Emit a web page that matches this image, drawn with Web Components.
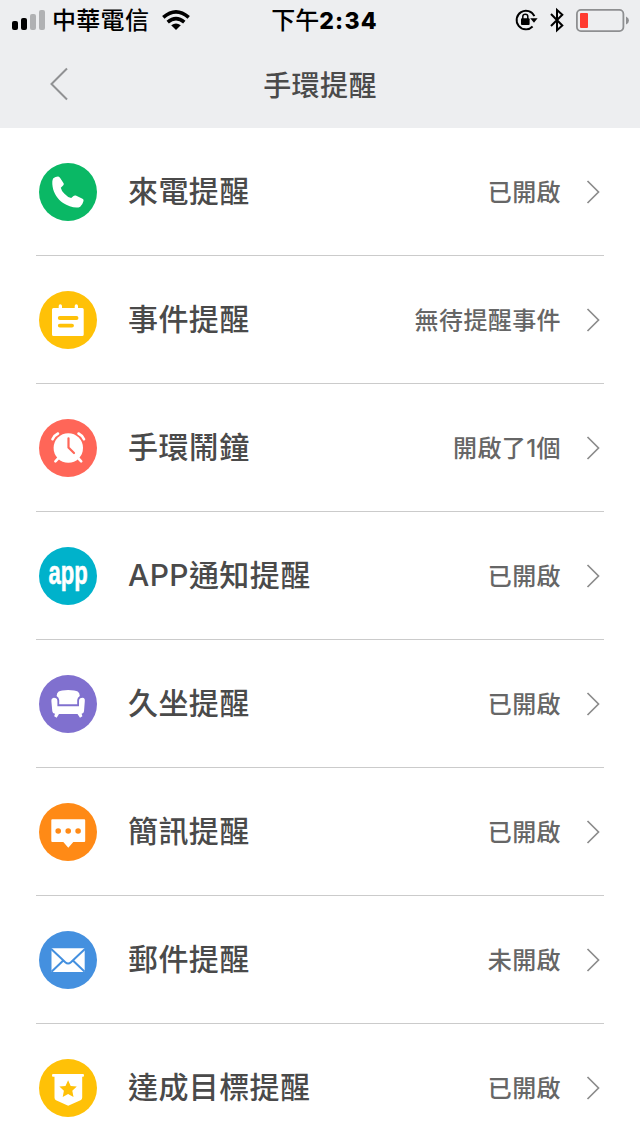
<!DOCTYPE html>
<html lang="zh-Hant">
<head>
<meta charset="utf-8">
<title>手環提醒</title>
<style>
    body {
        margin: 0;
        background: #fff;
        font-family: Inter, "Noto Sans CJK TC", sans-serif;
        font-weight: 500;
        color: #4a4a4a;
    }
</style>
</head>
<body>
<reminder-screen></reminder-screen>

<script>
// white shapes drawn on each 58x58 colored circle
const ICONS = {
    call: {
        color: '#0ab865',
        shape: `<path fill="#fff" d="M14.3 15.2Q16.5 13.3 19.2 13.4Q20.3 13.5 21 14.8L24.6 20.2Q25.2 21.2 24.3 22.2L21.8 24.7Q22.3 27.5 25.2 30.4Q28.8 34.3 32.2 35.1L34.5 32.9Q35.5 32.1 36.8 32.6L43.5 35.8Q45 36.6 44.5 38Q43.5 42 41.2 43.7C37.5 46 29.5 43.5 24.1 39.9C18.5 36.3 14.5 30 13.6 23.5Q12.7 17.5 14.3 15.2Z"/>`
    },
    event: {
        color: '#ffc107',
        shape: `<path fill="#fff" d="M14.5 17H19.7V15Q19.7 13.3 21.3 13.3T23 15V17H35.7V15Q35.7 13.3 37.3 13.3T39 15V17H43.3Q44.7 17 44.7 18.5V43.5Q44.7 45 43.2 45H14.5Q13 45 13 43.5V18.5Q13 17 14.5 17Z"/>
            <path d="M20.8 27H37.5M20.8 34.6H33" stroke="#ffc107" stroke-width="3.9" stroke-linecap="round"/>`
    },
    alarm: {
        color: '#ff6658',
        shape: `<circle cx="29.3" cy="29" r="14.7" fill="#fff"/>
            <path d="M13.5 20.2Q15 16.5 19 14.5M39.5 14.5Q43.5 16.5 45 20.2M16.4 42.3L20 38.5M42.2 42.3L38.6 38.5" fill="none" stroke="#fff" stroke-width="2.6" stroke-linecap="round"/>
            <path d="M29.5 19.3V28.5L35 34" fill="none" stroke="#ff6658" stroke-width="2.2" stroke-linecap="round"/>`
    },
    app: {
        color: '#00b2cb',
        shape: `<text transform="translate(9.4 37) scale(.65 1)" fill="#fff" stroke="#fff" stroke-width=".6" font-family="Liberation Sans, sans-serif" font-weight="700" font-size="34">app</text>`
    },
    sit: {
        color: '#8070cf',
        shape: `<path fill="#fff" d="M17.6 21Q17.8 18 19.7 16.6Q22 15 29.2 15T38.7 16.6Q40.7 18 40.8 21Q38.4 22.3 38.2 25V29.3H20.2V25Q20 22.3 17.6 21Z"/>
            <path fill="#fff" d="M14.8 22.8Q18.3 22.8 18.4 26V31.2H40V26Q40.1 22.8 43.6 22.8Q46.2 23.2 45.8 26.2L45 36.2Q44.8 38.6 42.6 38.8L43.4 41.3L41 42.7L38.5 39H20L17.7 42.7L15.2 41.3L16 38.8Q13.5 38.5 13.3 36.2L12.4 26.2Q12.2 23.3 14.8 22.8Z"/>`
    },
    sms: {
        color: '#ff8a16',
        shape: `<path fill="#fff" d="M13.3 16.3H45.2Q46.2 16.3 46.2 17.3V38Q46.2 39 45.2 39H34.3L29.3 44.8L24.3 39H13.3Q12.3 39 12.3 38V17.3Q12.3 16.3 13.3 16.3Z"/>
            <g fill="#ff8a16"><circle cx="19.2" cy="28" r="2.8"/><circle cx="29.2" cy="28" r="2.8"/><circle cx="39.1" cy="28" r="2.8"/></g>`
    },
    mail: {
        color: '#4490df',
        shape: `<path fill="#fff" d="M12.5 17.3H45.7V41H12.5Z"/>
            <path d="M12 17.7L26.3 31.2Q29.1 33.7 31.9 31.2L46.2 17.7M12.5 40.8L24.3 29.5M45.7 40.8L33.9 29.5" fill="none" stroke="#4490df" stroke-width="2"/>`
    },
    goal: {
        color: '#ffc107',
        shape: `<path fill="#fff" d="M14 15H44Q45 15 45 16.4T44 17.8H43.2V38.5Q43.2 40.5 41.5 41.3L29.2 46.7L17 41.3Q15.5 40.5 15.5 38.5V17.8H14Q13 17.8 13 16.4T14 15Z"/>
            <path fill="#ffc107" d="M29.1 21.2L31.7 26.9L37.8 27.6L33.3 31.8L34.5 37.9L29.1 34.9L23.7 37.9L24.9 31.8L20.4 27.6L26.5 26.9Z"/>`
    }
};

// round icon, picked by the name attribute
class ReminderIcon extends HTMLElement {
    constructor() {
        super();
        this.attachShadow({ mode: 'open' });
    }

    connectedCallback() {
        const icon = ICONS[this.getAttribute('name')];
        this.shadowRoot.innerHTML = `
            <style>
                :host {
                    display: block;
                    flex: none;
                    width: 58px;
                    height: 58px;
                    border-radius: 50%;
                    background: ${icon.color};
                }
                svg { display: block; overflow: visible; }
            </style>
            <svg width="58" height="58" viewBox="0 0 58 58">${icon.shape}</svg>
        `;
    }
}

// one row: icon, label slot, value slot and chevron
class ReminderRow extends HTMLElement {
    constructor() {
        super();
        this.attachShadow({ mode: 'open' });
    }

    connectedCallback() {
        this.shadowRoot.innerHTML = `
            <style>
                :host {
                    display: flex;
                    align-items: center;
                    box-sizing: border-box;
                    flex: none;
                    height: 128px;
                    padding: 1px 4px 0 3px;
                    border-bottom: 1px solid #cbcbcb;
                    white-space: nowrap;
                }
                .label {
                    flex: 1;
                    margin: 0 0 2px 31px;
                    font-size: 30px;
                    line-height: 44px;
                    letter-spacing: 0.4px;
                }
                .value {
                    margin: 2px 25px 0 0;
                    font-size: 24px;
                    line-height: 36px;
                    letter-spacing: 0.4px;
                    color: #666;
                }
                svg { flex: none; }
            </style>
            <reminder-icon name="${this.getAttribute('icon')}"></reminder-icon>
            <span class="label"><slot></slot></span>
            <span class="value"><slot name="value"></slot></span>
            <svg width="14" height="24" viewBox="0 0 14 24" fill="none" stroke="#8c8c8c" stroke-width="1.7"><path d="M1.5 1L12.5 12L1.5 23"/></svg>
        `;
    }
}

// carrier, time and device state
class StatusBar extends HTMLElement {
    constructor() {
        super();
        this.attachShadow({ mode: 'open' });
    }

    connectedCallback() {
        this.shadowRoot.innerHTML = `
            <style>
                :host {
                    display: grid;
                    grid-template-columns: 1fr auto 1fr;
                    align-items: center;
                    height: 40px;
                    padding: 0 11px 0 12px;
                    color: #000;
                    font-size: 24px;
                    line-height: 38px;
                    white-space: nowrap;
                }
                div { display: flex; align-items: center; }
                .carrier { margin: 2px 13px 0 7px; letter-spacing: 0.3px; }
                .time { padding: 2px 0 0 8px; }
                .time b { font-size: 23px; font-weight: 800; letter-spacing: 1.2px; }
                .right { justify-content: flex-end; }
                .lock { margin-right: 11px; }
                .bt { margin-right: 12px; }
            </style>
            <div>
                <svg width="33" height="40" viewBox="0 0 33 40">
                    <rect x="0" y="21" width="6" height="9" rx="2"/>
                    <rect x="9" y="18" width="6" height="12" rx="2"/>
                    <g fill="#b0b1b3"><rect x="18" y="14" width="6" height="16" rx="2"/><rect x="27" y="10" width="6" height="20" rx="2"/></g>
                </svg>
                <span class="carrier">中華電信</span>
                <svg width="28" height="40" viewBox="0 0 28 40">
                    <g fill="none" stroke="#000" stroke-width="3.6"><path d="M1.3 17.3Q14 6.3 26.7 17.3"/><path d="M5.7 22.2Q14 15.2 22.3 22.2"/></g>
                    <path d="M9.2 25.2Q14 21.8 18.8 25.2L14 30Z"/>
                </svg>
            </div>
            <div class="time"><span>下午</span><b>2:34</b></div>
            <div class="right">
                <svg class="lock" width="24" height="40" viewBox="0 0 24 40">
                    <path d="M19.4 16.2A9.3 9.3 0 1 0 17.6 26.5" fill="none" stroke="#000" stroke-width="1.9"/>
                    <path d="M15.2 18.3H22.6L19 22.8Z"/>
                    <rect x="6" y="18.2" width="8.6" height="6.8" rx="1"/>
                    <path d="M7.8 19V16.5Q7.8 14.3 10.3 14.3T12.8 16.5V19" fill="none" stroke="#000" stroke-width="1.5"/>
                </svg>
                <svg class="bt" width="14" height="40" viewBox="0 0 14 40" fill="none" stroke="#000" stroke-width="2">
                    <path d="M1 14L12.3 25.5L7 30.2V10L12.3 14.7L1 26"/>
                </svg>
                <svg width="53" height="40" viewBox="0 0 53 40">
                    <rect x="0.9" y="9.9" width="46.5" height="21.2" rx="4" fill="none" stroke="#8e8f91" stroke-width="1.8"/>
                    <rect x="4" y="13" width="8" height="15" rx="1" fill="#ff3b30"/>
                    <path d="M50 16.5Q53 18 53 20.5T50 24.5Z" fill="#8e8f91"/>
                </svg>
            </div>
        `;
    }
}

// back arrow and centered title
class NavBar extends HTMLElement {
    constructor() {
        super();
        this.attachShadow({ mode: 'open' });
    }

    connectedCallback() {
        this.shadowRoot.innerHTML = `
            <style>
                :host {
                    display: grid;
                    grid-template-columns: 1fr auto 1fr;
                    align-items: center;
                    height: 88px;
                    padding: 0 50px;
                    font-size: 28px;
                    letter-spacing: 0.4px;
                }
                svg { display: block; }
            </style>
            <svg width="18" height="34" viewBox="0 0 18 34" fill="none" stroke="#909193" stroke-width="2"><path d="M17 1.5L1.5 17L17 32.5"/></svg>
            <span><slot></slot></span>
        `;
    }
}

class ReminderScreen extends HTMLElement {
    constructor() {
        super();
        this.attachShadow({ mode: 'open' });
    }

    connectedCallback() {
        this.shadowRoot.innerHTML = `
            <style>
                :host {
                    display: flex;
                    flex-direction: column;
                    height: 1136px;
                    overflow: hidden;
                }
                header { flex: none; height: 128px; background: #edeef0; }
                main { display: flex; flex-direction: column; padding: 0 36px; }
            </style>
            <header>
                <status-bar></status-bar>
                <nav-bar>手環提醒</nav-bar>
            </header>
            <main>
                <reminder-row icon="call">來電提醒<span slot="value">已開啟</span></reminder-row>
                <reminder-row icon="event">事件提醒<span slot="value">無待提醒事件</span></reminder-row>
                <reminder-row icon="alarm">手環鬧鐘<span slot="value">開啟了1個</span></reminder-row>
                <reminder-row icon="app">APP通知提醒<span slot="value">已開啟</span></reminder-row>
                <reminder-row icon="sit">久坐提醒<span slot="value">已開啟</span></reminder-row>
                <reminder-row icon="sms">簡訊提醒<span slot="value">已開啟</span></reminder-row>
                <reminder-row icon="mail">郵件提醒<span slot="value">未開啟</span></reminder-row>
                <reminder-row icon="goal">達成目標提醒<span slot="value">已開啟</span></reminder-row>
            </main>
        `;
    }
}

// register the custom elements
customElements.define('reminder-icon', ReminderIcon);
customElements.define('reminder-row', ReminderRow);
customElements.define('status-bar', StatusBar);
customElements.define('nav-bar', NavBar);
customElements.define('reminder-screen', ReminderScreen);
</script>
</body>
</html>
